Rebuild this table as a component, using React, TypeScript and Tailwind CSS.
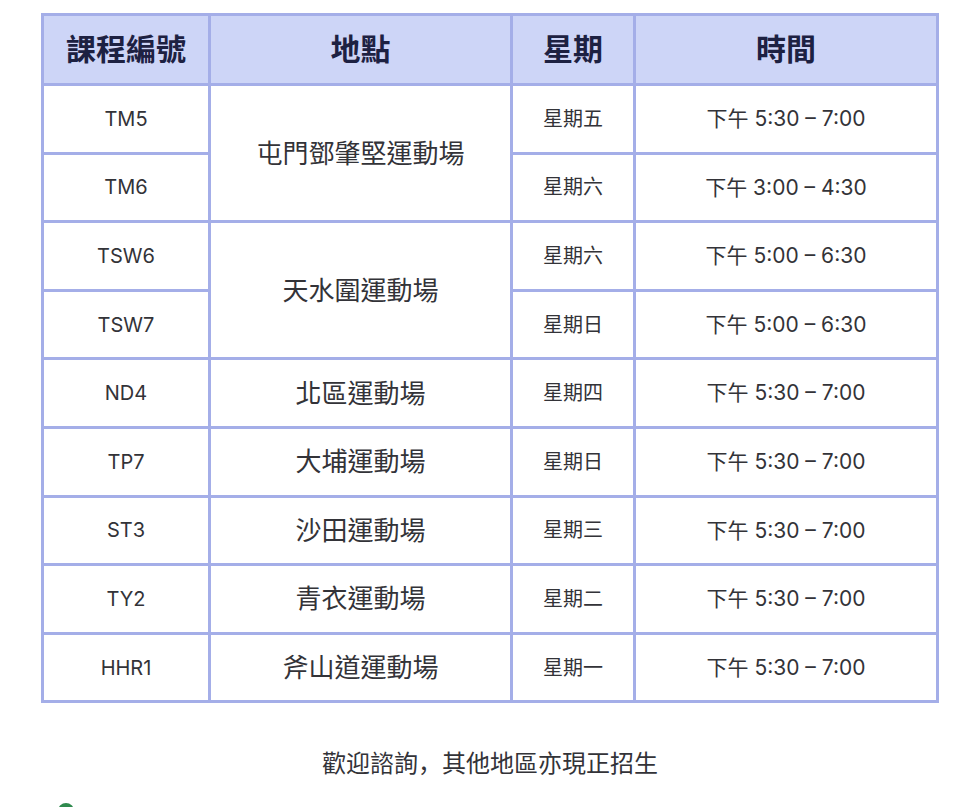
const rows = [
  { code: "TM5", day: "星期五", time: "下午 5:30 – 7:00" },
  { code: "TM6", day: "星期六", time: "下午 3:00 – 4:30" },
  { code: "TSW6", day: "星期六", time: "下午 5:00 – 6:30" },
  { code: "TSW7", day: "星期日", time: "下午 5:00 – 6:30" },
  { code: "ND4", day: "星期四", time: "下午 5:30 – 7:00", place: "北區運動場" },
  { code: "TP7", day: "星期日", time: "下午 5:30 – 7:00", place: "大埔運動場" },
  { code: "ST3", day: "星期三", time: "下午 5:30 – 7:00", place: "沙田運動場" },
  { code: "TY2", day: "星期二", time: "下午 5:30 – 7:00", place: "青衣運動場" },
  { code: "HHR1", day: "星期一", time: "下午 5:30 – 7:00", place: "斧山道運動場" },
];

const cell = "bg-white flex items-center justify-center text-[#333338]";

export default function App() {
  return (
    <div className="h-screen bg-white overflow-hidden font-['Inter','Noto_Sans_CJK_TC',sans-serif]">
      <div className="pt-[13px] pl-[41px]">
        <div className="w-[898px] grid grid-cols-[164px_299px_120px_300px] grid-rows-[67px_repeat(9,65.6px)] gap-[3px] p-[3px] bg-[#a4aee8]">
          <div className="bg-[#cdd5f7] flex items-center justify-center text-[30px] font-bold text-[#1d2142]">課程編號</div>
          <div className="bg-[#cdd5f7] flex items-center justify-center text-[30px] font-bold text-[#1d2142]">地點</div>
          <div className="bg-[#cdd5f7] flex items-center justify-center text-[30px] font-bold text-[#1d2142]">星期</div>
          <div className="bg-[#cdd5f7] flex items-center justify-center text-[30px] font-bold text-[#1d2142]">時間</div>

          {rows.map((r, i) => (
            <div key={r.code} className="contents">
              <div className={`${cell} text-[20px]`}>{r.code}</div>
              {i === 0 && (
                <div className={`${cell} row-span-2 text-[26px]`}>屯門鄧肇堅運動場</div>
              )}
              {i === 2 && (
                <div className={`${cell} row-span-2 text-[26px]`}>天水圍運動場</div>
              )}
              {r.place && <div className={`${cell} text-[26px]`}>{r.place}</div>}
              <div className={`${cell} text-[20px]`}>{r.day}</div>
              <div className={`${cell} text-[21px]`}>{r.time}</div>
            </div>
          ))}
        </div>
        <div className="w-[898px] mt-[41px] text-center text-[24px] leading-[36px] text-[#333338] font-['Noto_Sans_CJK_SC',sans-serif]">
          歡迎諮詢，其他地區亦現正招生
        </div>
        <div className="mt-[23px] ml-[17px] w-[16px] h-[16px] rounded-full bg-[#2f8a4e]" />
      </div>
    </div>
  );
}
